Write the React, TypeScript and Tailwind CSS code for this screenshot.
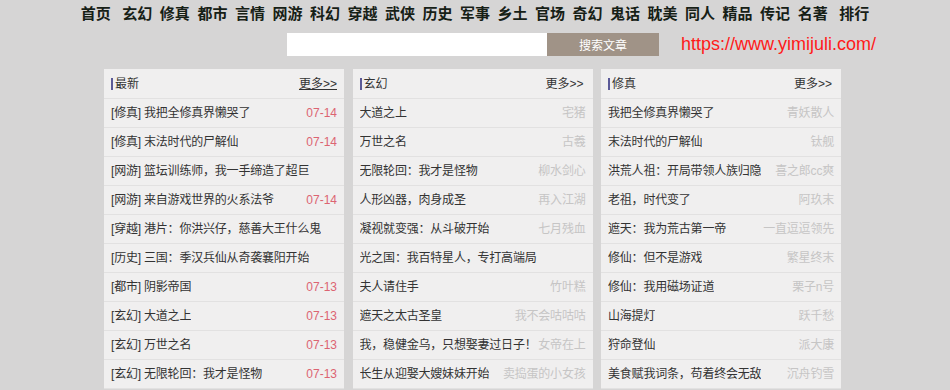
import React from "react";

const nav = ["首页","玄幻","修真","都市","言情","网游","科幻","穿越","武侠","历史","军事","乡土","官场","奇幻","鬼话","耽美","同人","精品","传记","名著","排行"];

type Row = { t: string; r?: string };

const latest: Row[] = [
  { t: "[修真] 我把全修真界懒哭了", r: "07-14" },
  { t: "[修真] 末法时代的尸解仙", r: "07-14" },
  { t: "[网游] 篮坛训练师，我一手缔造了超巨" },
  { t: "[网游] 来自游戏世界的火系法爷", r: "07-14" },
  { t: "[穿越] 港片：你洪兴仔，慈善大王什么鬼" },
  { t: "[历史] 三国：季汉兵仙从奇袭襄阳开始" },
  { t: "[都市] 阴影帝国", r: "07-13" },
  { t: "[玄幻] 大道之上", r: "07-13" },
  { t: "[玄幻] 万世之名", r: "07-13" },
  { t: "[玄幻] 无限轮回：我才是怪物", r: "07-13" },
];

const xuanhuan: Row[] = [
  { t: "大道之上", r: "宅猪" },
  { t: "万世之名", r: "古羲" },
  { t: "无限轮回：我才是怪物", r: "柳水剑心" },
  { t: "人形凶器，肉身成圣", r: "再入江湖" },
  { t: "凝视就变强：从斗破开始", r: "七月残血" },
  { t: "光之国：我百特星人，专打高端局" },
  { t: "夫人请住手", r: "竹叶糕" },
  { t: "遮天之太古圣皇", r: "我不会咕咕咕" },
  { t: "我，稳健金乌，只想娶妻过日子！", r: "女帝在上" },
  { t: "长生从迎娶大嫂妹妹开始", r: "卖捣蛋的小女孩" },
];

const xiuzhen: Row[] = [
  { t: "我把全修真界懒哭了", r: "青妖散人" },
  { t: "末法时代的尸解仙", r: "钛舰" },
  { t: "洪荒人祖：开局带领人族归隐", r: "喜之郎cc爽" },
  { t: "老祖，时代变了", r: "阿玖末" },
  { t: "遮天：我为荒古第一帝", r: "一直逗逗领先" },
  { t: "修仙：但不是游戏", r: "繁星终末" },
  { t: "修仙：我用磁场证道", r: "栗子n号" },
  { t: "山海提灯", r: "跃千愁" },
  { t: "狩命登仙", r: "派大康" },
  { t: "美食赋我词条，苟着终会无敌", r: "沉舟钓雪" },
];

function Panel({ title, rows, date, underline }: { title: string; rows: Row[]; date?: boolean; underline?: boolean }) {
  return (
    <div className="w-[240px] bg-[#f0efef] text-[12px] text-[#333]">
      <div className={`h-[30px] border-b border-[#e2e1e1] flex items-center justify-between pl-[7px] ${underline ? "pr-[7px]" : "pr-[9px]"}`}>
        <div className="flex items-center">
          <span className="w-[2px] h-[12px] bg-[#5b5a98] mr-[2px]" />
          <span>{title}</span>
        </div>
        <span className={underline ? "underline" : ""}>更多&gt;&gt;</span>
      </div>
      {rows.map((r, i) => (
        <div key={i} className="h-[29px] border-b border-[#e2e1e1] flex items-center justify-between pl-[7px] pr-[7px] overflow-hidden whitespace-nowrap tracking-[-0.2px]">
          <span className="overflow-hidden">{r.t}</span>
          {r.r && (
            <span className={`ml-[3px] shrink-0 ${date ? "text-[#dc6472] tracking-normal" : "text-[#c6c5c5]"}`}>{r.r}</span>
          )}
        </div>
      ))}
    </div>
  );
}

export default function App() {
  return (
    <div className="w-[950px] h-[390px] overflow-hidden bg-[#d6d5d5]" style={{ fontFamily: '"Liberation Sans", "Noto Sans CJK SC", sans-serif' }}>
      <div className="h-[26px] flex items-center justify-center gap-[7.5px] text-[15px] font-bold text-[#162016]" style={{ fontFamily: '"Noto Sans CJK SC", sans-serif' }}>
        {nav.map((n, i) => (
          <span key={n} className={i === 1 ? "ml-[4px]" : i === 20 ? "ml-[4px]" : ""}>{n}</span>
        ))}
      </div>
      <div className="mt-[7px] h-[23px] flex items-center pl-[287px]">
        <div className="w-[260px] h-[23px] bg-white" />
        <div className="w-[112px] h-[23px] bg-[#a09387] text-white text-[12px] flex items-center justify-center" style={{ fontFamily: '"Noto Sans CJK SC", sans-serif' }}>搜索文章</div>
        <span className="ml-[22px] text-[18px] text-[#ff1a1a]" style={{ fontFamily: '"Liberation Sans", Arial, sans-serif' }}>https://www.yimijuli.com/</span>
      </div>
      <div className="mt-[13px] ml-[104px] flex gap-[8.5px]">
        <Panel title="最新" rows={latest} date underline />
        <Panel title="玄幻" rows={xuanhuan} />
        <Panel title="修真" rows={xiuzhen} />
      </div>
    </div>
  );
}
